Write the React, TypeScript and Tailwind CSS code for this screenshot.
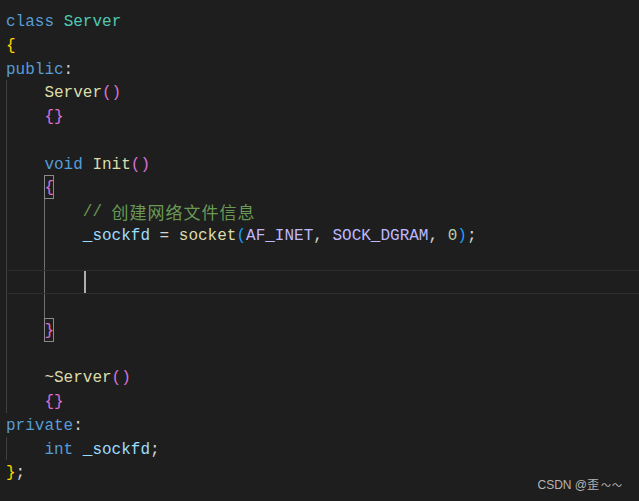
import React from "react";

const mono = { fontFamily: '"Liberation Mono", "Noto Sans CJK SC", monospace' };

function G({ bright }: { bright?: boolean }) {
  return (
    <span
      className={
        bright
          ? "w-[38.4px] shrink-0 border-l border-[#707070]"
          : "w-[38.4px] shrink-0 border-l border-[#404040]"
      }
    />
  );
}

function Row({ children, cur }: { children?: React.ReactNode; cur?: boolean }) {
  return (
    <div
      className={
        cur
          ? "flex h-[23.75px] items-stretch whitespace-pre leading-[27px] border-y border-[#2e2e2e]"
          : "flex h-[23.75px] items-stretch whitespace-pre leading-[27px]"
      }
    >
      {children}
    </div>
  );
}

function Box({ children }: { children: React.ReactNode }) {
  return (
    <span className="inline-block w-[9.6px] h-[23.75px] text-[#da70d6] outline outline-[#8a8a8a] -outline-offset-1">
      {children}
    </span>
  );
}

export default function App() {
  return (
    <div
      className="relative w-[639px] h-[501px] overflow-hidden bg-[#1e1e1e] pt-[9px] pl-[6px] text-[16px] text-[#d4d4d4]"
      style={mono}
    >
      <Row>
        <span className="text-[#569cd6]">class</span>
        <span> </span>
        <span className="text-[#4ec9b0]">Server</span>
      </Row>
      <Row>
        <span className="text-[#ffd700]">{"{"}</span>
      </Row>
      <Row>
        <span className="text-[#569cd6]">public</span>
        <span>:</span>
      </Row>
      <Row>
        <G />
        <span className="text-[#dcdcaa]">Server</span>
        <span className="text-[#da70d6]">()</span>
      </Row>
      <Row>
        <G />
        <span className="text-[#da70d6]">{"{}"}</span>
      </Row>
      <Row>
        <G />
      </Row>
      <Row>
        <G />
        <span className="text-[#569cd6]">void</span>
        <span> </span>
        <span className="text-[#dcdcaa]">Init</span>
        <span className="text-[#da70d6]">()</span>
      </Row>
      <Row>
        <G />
        <Box>{"{"}</Box>
      </Row>
      <Row>
        <G />
        <G bright />
        <span className="text-[#6a9955]">// </span>
        <span
          className="text-[#6a9955] text-[17px] tracking-[1px] leading-[26px]"
          style={{ fontFamily: '"Noto Sans CJK SC", sans-serif' }}
        >
          创建网络文件信息
        </span>
      </Row>
      <Row>
        <G />
        <G bright />
        <span className="text-[#9cdcfe]">_sockfd</span>
        <span> = </span>
        <span className="text-[#dcdcaa]">socket</span>
        <span className="text-[#179fff]">(</span>
        <span className="text-[#beb7ff]">AF_INET</span>
        <span>, </span>
        <span className="text-[#beb7ff]">SOCK_DGRAM</span>
        <span>, </span>
        <span className="text-[#b5cea8]">0</span>
        <span className="text-[#179fff]">)</span>
        <span>;</span>
      </Row>
      <Row>
        <G />
        <G bright />
      </Row>
      <Row cur>
        <G />
        <G bright />
        <span className="ml-[1px] w-[2px] bg-[#aeafad]" />
      </Row>
      <Row>
        <G />
        <G bright />
      </Row>
      <Row>
        <G />
        <Box>{"}"}</Box>
      </Row>
      <Row>
        <G />
      </Row>
      <Row>
        <G />
        <span className="text-[#dcdcaa]">~Server</span>
        <span className="text-[#da70d6]">()</span>
      </Row>
      <Row>
        <G />
        <span className="text-[#da70d6]">{"{}"}</span>
      </Row>
      <Row>
        <span className="text-[#569cd6]">private</span>
        <span>:</span>
      </Row>
      <Row>
        <G />
        <span className="text-[#569cd6]">int</span>
        <span> </span>
        <span className="text-[#9cdcfe]">_sockfd</span>
        <span>;</span>
      </Row>
      <Row>
        <span className="text-[#ffd700]">{"}"}</span>
        <span>;</span>
      </Row>
      <div
        className="absolute right-[16px] bottom-[7px] flex items-baseline text-[12px] text-[#b4b4b4]"
        style={{ fontFamily: '"Liberation Sans", "Noto Sans CJK SC", sans-serif' }}
      >
        <span>CSDN @歪</span>
        <span className="ml-[2px] text-[10px] tracking-[1px]">～～</span>
      </div>
    </div>
  );
}
